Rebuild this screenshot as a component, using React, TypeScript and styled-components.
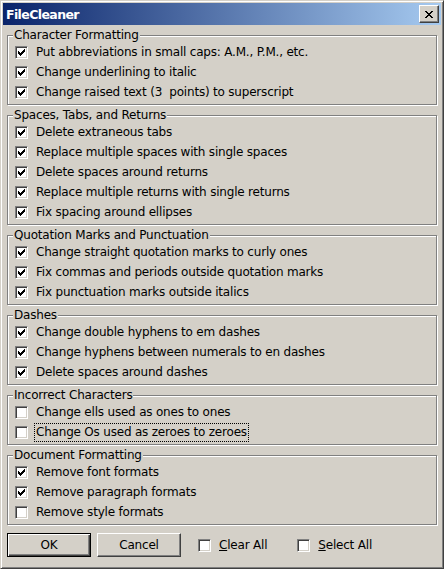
import React from "react";
import styled, { createGlobalStyle } from "styled-components";

const Global = createGlobalStyle`
  html, body { margin: 0; padding: 0; background: #d4d0c8; }
  * { box-sizing: border-box; }
`;

const Frame = styled.div`
  width: 444px;
  height: 569px;
  background: #d4d0c8;
  border: 1px solid;
  border-color: #d4d0c8 #404040 #404040 #d4d0c8;
  box-shadow: inset 1px 1px 0 #fff, inset -1px -1px 0 #808080;
  padding: 2px;
  display: flex;
  flex-direction: column;
  font-family: "DejaVu Sans", Verdana, sans-serif;
  font-size: 12px;
  letter-spacing: -0.2px;
  color: #000;
`;

const TitleBar = styled.div`
  height: 22px;
  flex: none;
  display: flex;
  align-items: center;
  justify-content: space-between;
  padding: 0 2px 0 3px;
  background: linear-gradient(to right, #0a246a, #a6caf0);
`;

const TitleText = styled.span`
  color: #fff;
  font-weight: bold;
  font-size: 12.5px;
  letter-spacing: -0.6px;
`;

const CloseButton = styled.div`
  width: 20px;
  height: 18px;
  background: #d4d0c8;
  border: 1px solid;
  border-color: #fff #404040 #404040 #fff;
  box-shadow: inset -1px -1px 0 #808080;
  display: flex;
  align-items: center;
  justify-content: center;
`;

const Content = styled.div`
  flex: 1;
  display: flex;
  flex-direction: column;
  padding: 3px 4px 0 4px;
  gap: 3px;
`;

const Group = styled.fieldset`
  margin: 0;
  padding: 0 7px 2px 7px;
  border: 1px solid #808080;
  box-shadow: 1px 1px 0 #fff, inset 1px 1px 0 #fff;
  min-width: 0;
`;

const Legend = styled.legend`
  margin-left: -2px;
  padding: 0 1px;
  line-height: 14px;
  height: 14px;
  background: #d4d0c8;
`;

const Row = styled.div`
  height: 20px;
  display: flex;
  align-items: center;
  gap: 6px;
`;

const Box = styled.span`
  width: 13px;
  height: 13px;
  flex: none;
  background: #fff;
  border: 1px solid;
  border-color: #808080 #fff #fff #808080;
  box-shadow: inset 1px 1px 0 #404040, inset -1px -1px 0 #d4d0c8;
  display: flex;
  align-items: center;
  justify-content: center;
`;

const Label = styled.span<{ $focus?: boolean }>`
  padding: 0 1px;
  line-height: 17px;
  border: 1px ${(p) => (p.$focus ? "dotted #000" : "solid transparent")};
  white-space: nowrap;
`;

const Footer = styled.div`
  display: flex;
  align-items: center;
  padding: 5px 0 0 0;
`;

const Button = styled.div<{ $default?: boolean }>`
  width: 84px;
  height: 24px;
  display: flex;
  align-items: center;
  justify-content: center;
  background: #d4d0c8;
  border: 1px solid;
  border-color: ${(p) => (p.$default ? "#000" : "#fff #404040 #404040 #fff")};
  box-shadow: ${(p) =>
    p.$default
      ? "inset 1px 1px 0 #fff, inset -1px -1px 0 #404040, inset -2px -2px 0 #808080"
      : "inset -1px -1px 0 #808080"};
  margin-right: 6px;
`;

const FooterCheck = styled.div<{ $gapLeft: number }>`
  display: flex;
  align-items: center;
  gap: 6px;
  margin-left: ${(p) => p.$gapLeft}px;
`;

const Check = () => (
  <svg width="7" height="7" viewBox="0 0 7 7" shapeRendering="crispEdges">
    <g fill="#000">
      <rect x="6" y="0" width="1" height="1" />
      <rect x="5" y="1" width="2" height="1" />
      <rect x="0" y="2" width="1" height="1" />
      <rect x="4" y="2" width="3" height="1" />
      <rect x="0" y="3" width="2" height="1" />
      <rect x="3" y="3" width="3" height="1" />
      <rect x="0" y="4" width="5" height="1" />
      <rect x="1" y="5" width="3" height="1" />
      <rect x="2" y="6" width="1" height="1" />
    </g>
  </svg>
);

const CloseIcon = () => (
  <svg width="8" height="7" viewBox="0 0 8 7" shapeRendering="crispEdges">
    <g fill="#000">
      <rect x="0" y="0" width="2" height="1" />
      <rect x="6" y="0" width="2" height="1" />
      <rect x="1" y="1" width="2" height="1" />
      <rect x="5" y="1" width="2" height="1" />
      <rect x="2" y="2" width="4" height="1" />
      <rect x="3" y="3" width="2" height="1" />
      <rect x="2" y="4" width="4" height="1" />
      <rect x="1" y="5" width="2" height="1" />
      <rect x="5" y="5" width="2" height="1" />
      <rect x="0" y="6" width="2" height="1" />
      <rect x="6" y="6" width="2" height="1" />
    </g>
  </svg>
);

type Item = { text: string; checked: boolean; focus?: boolean };
type Section = { title: string; items: Item[] };

const sections: Section[] = [
  {
    title: "Character Formatting",
    items: [
      { text: "Put abbreviations in small caps: A.M., P.M., etc.", checked: true },
      { text: "Change underlining to italic", checked: true },
      { text: "Change raised text (3\u00a0 points) to superscript", checked: true },
    ],
  },
  {
    title: "Spaces, Tabs, and Returns",
    items: [
      { text: "Delete extraneous tabs", checked: true },
      { text: "Replace multiple spaces with single spaces", checked: true },
      { text: "Delete spaces around returns", checked: true },
      { text: "Replace multiple returns with single returns", checked: true },
      { text: "Fix spacing around ellipses", checked: true },
    ],
  },
  {
    title: "Quotation Marks and Punctuation",
    items: [
      { text: "Change straight quotation marks to curly ones", checked: true },
      { text: "Fix commas and periods outside quotation marks", checked: true },
      { text: "Fix punctuation marks outside italics", checked: true },
    ],
  },
  {
    title: "Dashes",
    items: [
      { text: "Change double hyphens to em dashes", checked: true },
      { text: "Change hyphens between numerals to en dashes", checked: true },
      { text: "Delete spaces around dashes", checked: true },
    ],
  },
  {
    title: "Incorrect Characters",
    items: [
      { text: "Change ells used as ones to ones", checked: false },
      { text: "Change Os used as zeroes to zeroes", checked: false, focus: true },
    ],
  },
  {
    title: "Document Formatting",
    items: [
      { text: "Remove font formats", checked: true },
      { text: "Remove paragraph formats", checked: true },
      { text: "Remove style formats", checked: false },
    ],
  },
];

export default function App() {
  return (
    <>
      <Global />
      <Frame>
        <TitleBar>
          <TitleText>FileCleaner</TitleText>
          <CloseButton>
            <CloseIcon />
          </CloseButton>
        </TitleBar>
        <Content>
          {sections.map((s) => (
            <Group key={s.title}>
              <Legend>{s.title}</Legend>
              {s.items.map((it) => (
                <Row key={it.text}>
                  <Box>{it.checked && <Check />}</Box>
                  <Label $focus={it.focus}>{it.text}</Label>
                </Row>
              ))}
            </Group>
          ))}
          <Footer>
            <Button $default>OK</Button>
            <Button>Cancel</Button>
            <FooterCheck $gapLeft={11}>
              <Box />
              <Label>
                <u>C</u>lear All
              </Label>
            </FooterCheck>
            <FooterCheck $gapLeft={28}>
              <Box />
              <Label>
                <u>S</u>elect All
              </Label>
            </FooterCheck>
          </Footer>
        </Content>
      </Frame>
    </>
  );
}
